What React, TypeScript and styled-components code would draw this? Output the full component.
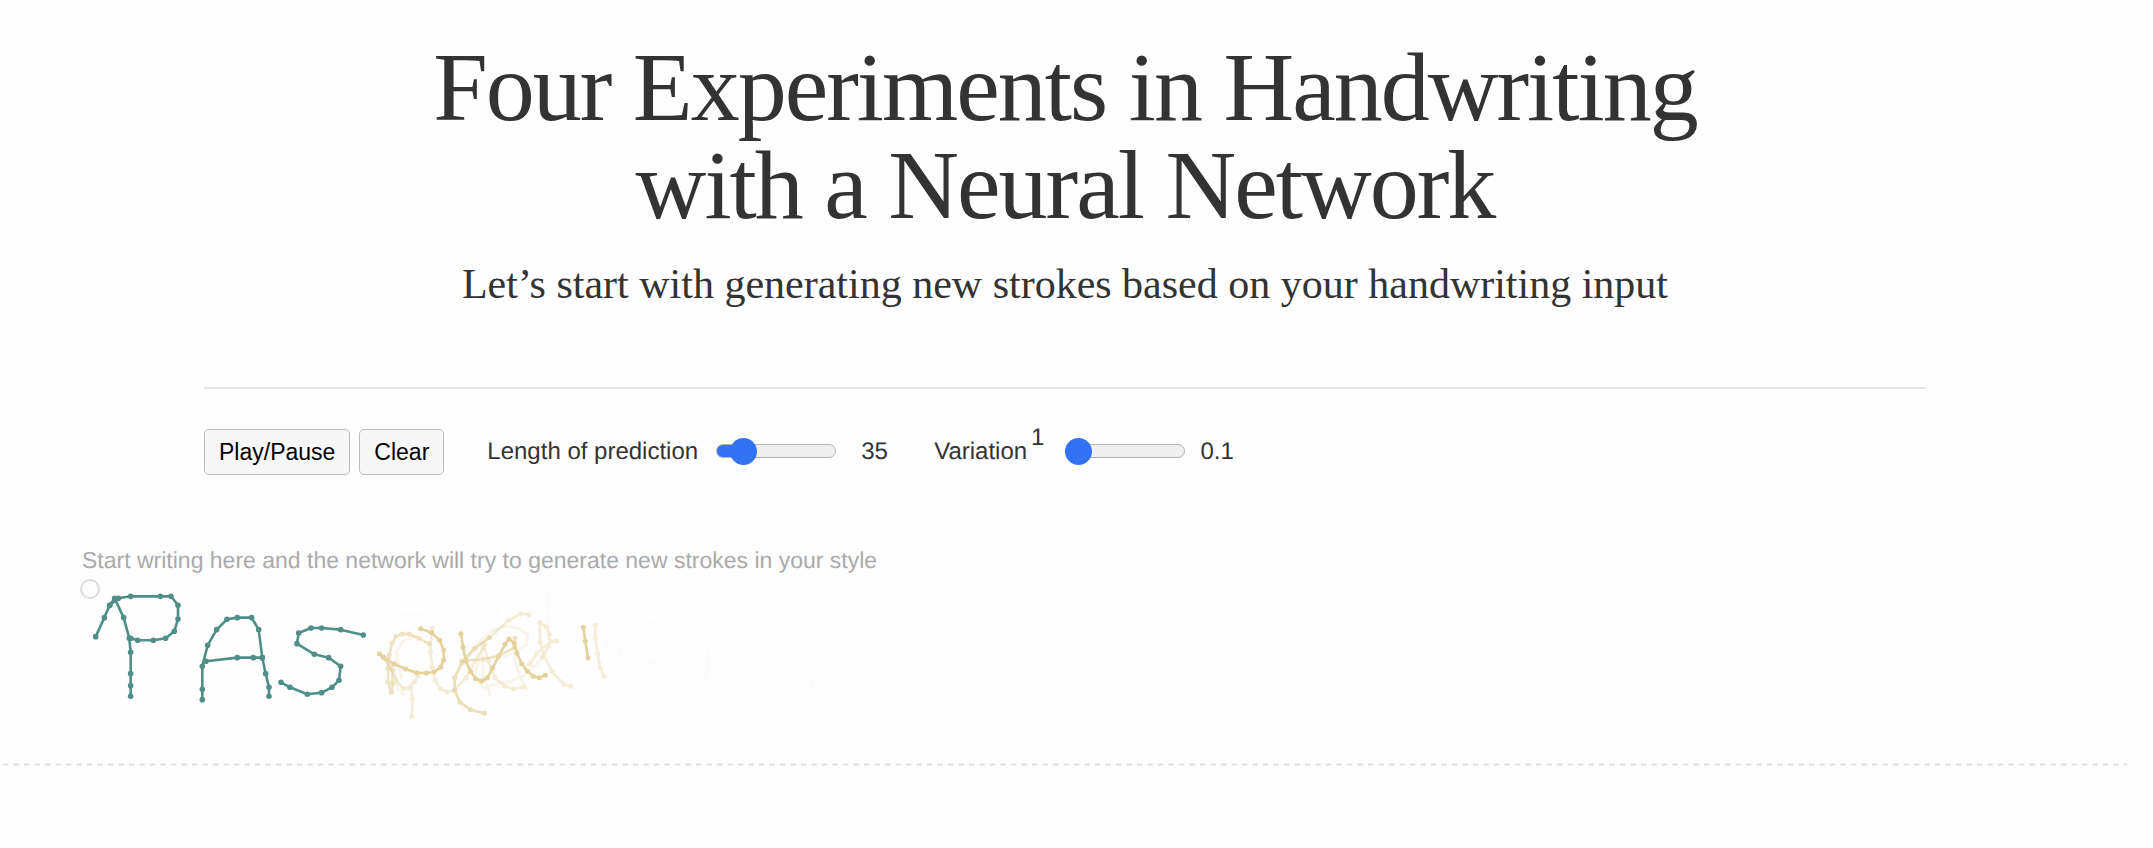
import React, { useId, useState } from "react";
import styled, { createGlobalStyle } from "styled-components";

const GlobalStyle = createGlobalStyle`
  * { box-sizing: border-box; }
  body {
    margin: 0;
    background: #fefefe;
    color: #333;
    font-family: "Liberation Sans", Arial, sans-serif;
    font-size: 24px;
    line-height: 28px;
    text-rendering: geometricPrecision;
  }
`;

const Page = styled.main`
  padding: 38px 26px 80px 3px;
`;

const Header = styled.header`
  text-align: center;
  font-family: "Liberation Serif", "Times New Roman", serif;
  text-rendering: auto;
`;

const Title = styled.h1`
  margin: 0;
  font-size: 98px;
  line-height: 98px;
  font-weight: 400;
  letter-spacing: -2px;
`;

const Subtitle = styled.h2`
  margin: 26px 0 0;
  font-size: 42px;
  line-height: 48px;
  font-weight: 400;
`;

const Controls = styled.section`
  display: flex;
  align-items: center;
  margin: 79px 201px 0;
  padding-top: 40px;
  border-top: 2px solid #e5e5e5;
`;

const Button = styled.button`
  height: 46px;
  margin-right: 9px;
  padding: 0 14px;
  border: 1px solid #bbb;
  border-radius: 5px;
  background: #f7f7f7;
  color: #000;
  font: inherit;
  font-size: 23px;
`;

const Field = styled.div<{ $indent: number }>`
  display: flex;
  align-items: center;
  margin-left: ${(p) => p.$indent}px;
`;

const Note = styled.sup`
  align-self: flex-start;
  position: relative;
  top: -14px;
  margin-left: 4px;
  font-size: 24px;
  line-height: 28px;
`;

const Slider = styled.input<{ $gap: number; $fill: number }>`
  appearance: none;
  width: 120px;
  height: 14px;
  margin: 0 0 2px ${(p) => p.$gap}px;
  border: 1px solid #b2b2b2;
  border-radius: 7px;
  background: linear-gradient(#3273f6, #3273f6) no-repeat left / ${(p) => p.$fill}% 100% #efefef;
  background-origin: border-box;

  &::-webkit-slider-thumb {
    appearance: none;
    width: 27px;
    height: 27px;
    margin: 0 -1px;
    border-radius: 50%;
    background: #3273f6;
  }
`;

const Value = styled.output<{ $gap: number }>`
  min-width: 36px;
  margin-left: ${(p) => p.$gap}px;
`;

const Hint = styled.p`
  margin: 72px 0 0 79px;
  color: #aaa;
  font-size: 23px;
  line-height: 26px;
`;

const Sketch = styled.svg`
  display: block;
  width: 100%;
  height: 193px;
`;

type Stroke = string;

const written: Stroke[] = [
  "77,317 103,260 119,223 134,202 161,260 178,322 182,364 182,428 182,464 182,496",
  "119,223 145,202 182,196 271,196 303,196 324,223 324,264 313,301 287,322 250,328 203,328 182,322",
  "397,506 397,475 397,406 413,343 440,296 471,265 502,260 545,260 566,296 577,380 587,428 597,469 597,496",
  "408,391 502,380 550,380 577,380",
  "880,312 812,296 755,291 723,291 686,306 681,338 733,370 776,380 812,406 807,448 786,469 755,485 712,490 660,469 633,454",
];

const predicted: { opacity: number; strokes: Stroke[] }[] = [
  {
    opacity: 0.02,
    strokes: [
      "95,95 150,100 210,104", "410,75 415,130 400,180",
      "565,30 562,100 568,150", "635,290 670,288 700,270", "735,210 742,165 760,160",
      "775,180 778,240", "800,330 820,290 850,250 880,240 900,260", "1040,180 1045,260 1030,320",
      "860,130 900,120", "1290,300 1310,260 1330,250 1355,290 1350,340", "1100,240 1130,210 1160,220",
    ],
  },
  {
    opacity: 0.2,
    strokes: [
      "320,225 360,180 395,150 440,135 475,142 503,160 500,190 470,210 435,225",
      "395,312 450,300 490,285 520,260 548,228", "365,200 370,290 385,325 390,342",
      "375,190 355,240 345,285 370,320 395,312", "460,190 465,240 480,290 502,326",
      "130,340 112,325 105,270 112,220",
      "170,165 130,180 110,210 115,250 125,290",
    ],
  },
  {
    opacity: 0.38,
    strokes: [
      "217,141 211,212 217,260 225,298 242,323 262,333 283,327 318,290 345,240 375,190",
      "174,285 163,302 147,321 130,323 110,300 90,260 70,232", "155,407 158,353 152,320",
      "370,190 385,240 405,290 434,315 461,324 490,318", "540,125 540,182 552,225 576,272 612,310 632,316",
      "706,133 706,172 713,218 721,261 732,286", "388,170 446,118 482,98 506,101",
      "590,180 573,181 531,217 509,249", "540,125 560,138 568,160 566,195 548,228",
    ],
  },
  {
    opacity: 0.6,
    strokes: [
      "207,188 176,172 147,159 127,159 108,166 96,187 88,222 84,262 84,303 94,334",
      "78,232 97,268 98,308 94,330",
      "306,240 320,238 370,235 415,225 463,200 465,172",
    ],
  },
  {
    opacity: 0.7,
    strokes: ["373,397 332,386 300,364 284,329 284,290 306,245 345,202 388,170"],
  },
  {
    opacity: 1,
    strokes: [
      "182,143 215,155 239,178 251,207 251,237 242,259 222,273 199,276 169,275 137,264 102,249 69,228 58,218",
      "303,158 309,198 317,240 332,272 347,293 365,300 382,291 397,262 416,226 435,190 447,174 463,187 471,217 485,248 502,271 520,286 538,290 556,283",
      "670,139 676,181 684,231",
    ],
  },
];

function Trail({ points, radius }: { points: Stroke; radius: number }) {
  return (
    <>
      <polyline points={points} fill="none" strokeLinejoin="round" />
      {points.split(" ").map((p, i) => {
        const [x, y] = p.split(",");
        return <circle key={i} cx={x} cy={y} r={radius} stroke="none" />;
      })}
    </>
  );
}

export default function App() {
  const lengthId = useId();
  const variationId = useId();
  const [length, setLength] = useState(35);
  const [variation, setVariation] = useState(0.1);
  const [strokes, setStrokes] = useState(true);
  const [playing, setPlaying] = useState(true);

  return (
    <>
      <GlobalStyle />
      <Page>
        <Header>
          <Title>
            Four Experiments in Handwriting
            <br />
            with a Neural Network
          </Title>
          <Subtitle>Let’s start with generating new strokes based on your handwriting input</Subtitle>
        </Header>

        <Controls>
          <Button onClick={() => setPlaying(!playing)}>Play/Pause</Button>
          <Button onClick={() => setStrokes(false)}>Clear</Button>
          <Field $indent={34}>
            <label htmlFor={lengthId}>Length of prediction</label>
            <Slider
              id={lengthId} type="range" min={10} max={180} value={length}
              $gap={18} $fill={11 + ((length - 10) / 170) * 78}
              onChange={(e) => setLength(Number(e.target.value))}
            />
            <Value $gap={25} htmlFor={lengthId}>{length}</Value>
          </Field>
          <Field $indent={37}>
            <label htmlFor={variationId}>Variation</label>
            <Note>1</Note>
            <Slider
              id={variationId} type="range" min={0.1} max={2} step={0.1} value={variation}
              $gap={21} $fill={11 + ((variation - 0.1) / 1.9) * 78}
              onChange={(e) => setVariation(Number(e.target.value))}
            />
            <Value $gap={15} htmlFor={variationId}>{variation}</Value>
          </Field>
        </Controls>

        <Hint>Start writing here and the network will try to generate new strokes in your style</Hint>
        <Sketch>
          <circle cx="87" cy="16" r="9" fill="none" stroke="#ddd" strokeWidth="2" />
          {strokes && (
            <g transform="translate(67 -42) scale(0.3333)" stroke="#4f8f88" fill="#4f8f88" strokeWidth="7.8">
              {written.map((s) => <Trail key={s} points={s} radius={8.4} />)}
            </g>
          )}
          {strokes && playing && (
            <g transform="translate(357 8) scale(0.3333)" stroke="#e5d19a" fill="#e5d19a" strokeWidth="7.8">
              {predicted.map((layer) => (
                <g key={layer.opacity} opacity={layer.opacity}>
                  {layer.strokes.map((s) => <Trail key={s} points={s} radius={layer.opacity < 0.3 ? 3.9 : 7.5} />)}
                </g>
              ))}
            </g>
          )}
          <line x1="0" x2="100%" y1="191.5" y2="191.5" stroke="#ddd" strokeWidth="2" strokeDasharray="5.25" />
        </Sketch>
      </Page>
    </>
  );
}
